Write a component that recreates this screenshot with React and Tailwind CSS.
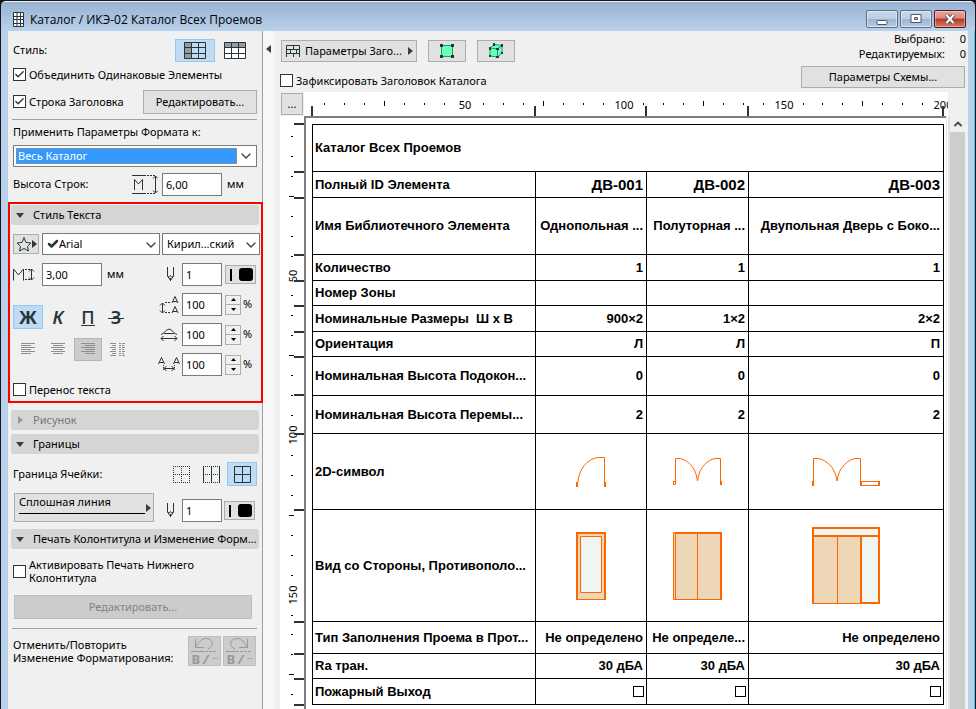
import React from 'react';
import { ChevronDown, ChevronUp, Check } from 'lucide-react';

const rulerTicks = Array.from({ length: 33 }, (_, i) => i + 1);
const columnMarks = [8, 231, 342, 444, 639];
const rowMarks = [8, 56, 82, 139, 165, 190, 216, 241, 279, 318, 394, 506, 538, 563, 589];

const rows = [
    { name: 'Полный ID Элемента', height: 'h-[26px]', values: ['ДВ-001', 'ДВ-002', 'ДВ-003'], big: true },
    {
        name: 'Имя Библиотечного Элемента',
        height: 'h-[57px]',
        values: ['Однопольная ...', 'Полуторная ...', 'Двупольная Дверь с Боко...'],
    },
    { name: 'Количество', height: 'h-[26px]', values: ['1', '1', '1'] },
    { name: 'Номер Зоны', height: 'h-[25px]', values: ['', '', ''] },
    { name: 'Номинальные Размеры  Ш х В', height: 'h-[26px]', values: ['900×2', '1×2', '2×2'] },
    { name: 'Ориентация', height: 'h-[25px]', values: ['Л', 'Л', 'П'] },
    { name: 'Номинальная Высота Подокон...', height: 'h-[39px]', values: ['0', '0', '0'] },
    { name: 'Номинальная Высота Перемы...', height: 'h-[38px]', values: ['2', '2', '2'] },
    { name: '2D-символ', height: 'h-[76px]', drawings: [<SinglePlan />, <DoublePlan />, <WidePlan />] },
    {
        name: 'Вид со Стороны, Противополо...',
        height: 'h-[112px]',
        drawings: [<SingleFront />, <DoubleFront />, <WideFront />],
    },
    {
        name: 'Тип Заполнения Проема в Прот...',
        height: 'h-[32px]',
        values: ['Не определено', 'Не определе...', 'Не определено'],
    },
    { name: 'Ra тран.', height: 'h-[25px]', values: ['30 дБА', '30 дБА', '30 дБА'] },
    { name: 'Пожарный Выход', height: 'h-[26px]', checks: true },
];

function Svg({ w, h, children, className = '' }) {
    return (
        <svg
            width={w}
            height={h}
            viewBox={`0 0 ${w} ${h}`}
            fill="none"
            stroke="currentColor"
            className={`shrink-0 ${className}`}
            aria-hidden="true"
        >
            {children}
        </svg>
    );
}

/* Door drawings */

function SinglePlan() {
    return (
        <Svg w={30} h={30} className="mx-auto text-[#ff6600]">
            <path d="M28.5 .5V26M28.5 .5H22C11 2 3 12 2 25" />
            <path d="M1 25v5M29 25v5" strokeWidth="2" />
        </Svg>
    );
}

function DoublePlan() {
    return (
        <Svg w={49} h={28} className="mx-auto text-[#ff6600]">
            <path d="M2.5 24V.5H7C15 2 22 10 23.500 18L24.500 23L25.500 18C27 10 34 2 42 .5H47.500V24" />
            <path d="M.5 23.500h2v3h-2z" />
            <path d="M48 23v4" strokeWidth="2" />
        </Svg>
    );
}

function WidePlan() {
    return (
        <Svg w={68} h={28} className="mx-auto text-[#ff6600]">
            <path d="M1.500 24V.5H6C15 2 22 10 24 18L25 23L26 18C28 10 35 2 43 .5H48.500V24" />
            <path d="M1 23v5" strokeWidth="2" />
            <path d="M48.500 23.500H67.500V27.500H48.500z" />
            <path d="M49 23v5M67 23v5" strokeWidth="2" />
        </Svg>
    );
}

function SingleFront() {
    return (
        <Svg w={30} h={68} className="mx-auto text-[#ff6600]">
            <path d="M0 0h30v68H0z" fill="#eed7b7" stroke="none" />
            <path d="M4.500 4.500h21v56h-21z" fill="#eff5f1" />
            <path d="M1 68V1H29V68" strokeWidth="2" />
            <path d="M0 67.500h30" />
        </Svg>
    );
}

function DoubleFront() {
    return (
        <Svg w={49} h={68} className="mx-auto text-[#ff6600]">
            <path d="M.5 .5H48.500V67.500H.5z" fill="#eed7b7" />
            <path d="M2.500 1V67M24.500 1V67" />
            <path d="M2 1H48V68" strokeWidth="2" />
        </Svg>
    );
}

function WideFront() {
    return (
        <Svg w={68} h={77} className="mx-auto text-[#ff6600]">
            <path d="M1 9h48v67H1z" fill="#eed7b7" stroke="none" />
            <path d="M49 9h18v67H49zM1 1h66v8H1z" fill="#eff5f1" stroke="none" />
            <path d="M1 77V1H67V76H49V9M1 9H67" strokeWidth="2" />
            <path d="M25.500 9V76M0 76.500H50" />
        </Svg>
    );
}

/* Toolbar and palette icons */

function GridIcon({ side }) {
    return (
        <Svg w={22} h={17} className="text-[#26343c]">
            {!side && <path d="M.5 .5h21v16H.5z" fill="#fff" stroke="none" />}
            {side ? (
                <path d="M0 0h7v17H0z" fill="#949c9f" stroke="none" />
            ) : (
                <path d="M0 0h22v5H0z" fill="#949c9f" stroke="none" />
            )}
            <path d="M.5 .5h21v16H.5zM.5 5.500h21M.5 11.500h21M7.500 .5v16M14.500 .5v16" />
        </Svg>
    );
}

function PenIcon() {
    return (
        <Svg w={9} h={15} className="text-[#26343c]">
            <path d="M1.500 0V9L4.500 13.500L7.500 9V0M1.500 8.500C2.500 10.500 3.500 10.500 4.500 8.500C5.500 10.500 6.500 10.500 7.500 8.500M4.500 11v3" />
        </Svg>
    );
}

function LetterHeightIcon() {
    return (
        <Svg w={22} h={13} className="text-[#26343c]">
            <path d="M.5 12.500V1L5.500 7L10.500 1V12.500" />
            <path d="M12 1.500h6M12 11.500h6" strokeDasharray="2 1" />
            <path d="M18.500 1v11M16 3.500L18.500 1L21 3.500M16 9.500L18.500 12L21 9.500" />
        </Svg>
    );
}

function RowHeightIcon() {
    return (
        <Svg w={26} h={19} className="text-[#26343c]">
            <path d="M0 .5h14M0 18.500h14" />
            <path d="M15 .5h8M15 18.500h8" strokeDasharray="2 1" />
            <path d="M2.500 15V4.500L6.500 9L10.500 4.500V15" />
            <path d="M23.500 1v17M21 3.500L23.500 1L26 3.500M21 15.500L23.500 18L26 15.500" />
        </Svg>
    );
}

function LeadingIcon() {
    return (
        <Svg w={20} h={18} className="text-[#26343c]">
            <path d="M3.500 7v10M1 9.500L3.500 7L6 9.500M1 14.500L3.500 17L6 14.500" />
            <path d="M6 6.500h6M6 16.500h6" strokeDasharray="2 1" />
            <path d="M13 7L16 .5L19 7M14 5.500h4M13 17L16 10.500L19 17M14 15.500h4" />
        </Svg>
    );
}

function WidthIcon() {
    return (
        <Svg w={18} h={13} className="text-[#26343c]">
            <path d="M1 6.500C4 6 5 2 9 1C13 2 14 6 17 6.500M4 5.500h10" />
            <path d="M1 10.500h16M3.500 8L1 10.500L3.500 13M14.500 8L17 10.500L14.500 13" />
        </Svg>
    );
}

function SpacingIcon() {
    return (
        <Svg w={22} h={15} className="text-[#26343c]">
            <path d="M.5 7L3.500 .5L6.500 7M1.500 5.500h4M15.500 7L18.500 .5L21.500 7M16.500 5.500h4" />
            <path d="M5.500 8v5M16.500 8v5" strokeDasharray="1 1" />
            <path d="M6 11.500h10M8.500 9L6 11.500L8.500 14M13.500 9L16 11.500L13.500 14" />
        </Svg>
    );
}

function AlignIcon({ type }) {
    const paths = {
        left: 'M0 .5h14M0 2.500h10M0 4.500h14M0 6.500h10M0 8.500h14M0 10.500h10',
        center: 'M0 .5h14M2 2.500h10M0 4.500h14M2 6.500h10M0 8.500h14M2 10.500h10',
        right: 'M0 .5h14M4 2.500h10M0 4.500h14M4 6.500h10M0 8.500h14M4 10.500h10',
        split: 'M0 .5h6M2 2.500h4M0 4.500h6M2 6.500h4M0 8.500h6M2 10.500h4M0 12.500h6M9 .5h2M12 .5h3M9 2.500h2M12 2.500h2M9 4.500h2M12 4.500h3M9 6.500h2M12 6.500h2M9 8.500h2M12 8.500h3M9 10.500h2M12 10.500h2M9 12.500h2M12 12.500h3',
    };
    return (
        <Svg w={15} h={13} className="text-[#8e8e8e]">
            <path d={paths[type]} />
        </Svg>
    );
}

function BorderIcon({ type }) {
    return (
        <Svg w={17} h={17} className="text-[#26343c]">
            {type === 'all' && <path d="M.5 .5h16v16H.5zM.5 8.500h16M8.500 .5v16" />}
            {type === 'none' && <path d="M0 .5h17M0 8.500h17M0 16.500h17M.5 0v17M8.500 0v17M16.500 0v17" strokeDasharray="1 1" />}
            {type === 'columns' && (
                <>
                    <path d="M0 .5h17M0 8.500h17M0 16.500h17" strokeDasharray="1 1" />
                    <path d="M.5 0v17M8.500 0v17M16.500 0v17" />
                </>
            )}
        </Svg>
    );
}

function HistoryIcon({ redo }) {
    return (
        <div className="flex flex-col items-center text-[#999]">
            <Svg w={26} h={15}>
                {redo ? (
                    <path d="M9 12C2 9 4 1.500 11 1.500C16 1.500 18 5 21 10M21.500 2v8.500H13" />
                ) : (
                    <path d="M17 12C24 9 22 1.500 15 1.500C11 1.500 8 5 4.500 10M4.500 2v8.500H13" />
                )}
                <path d="M0 14.500h13" />
                <path d="M14 14.500h12" strokeDasharray="3 1" />
            </Svg>
            <span className="flex items-center gap-[3px] text-[13px] leading-[14px] font-bold">
                B<i>/</i>
                <span className="h-px w-1.5 bg-[#8fb0e6]" />
            </span>
        </div>
    );
}

function Triangle({ dir = 'right', className = 'text-[#3c3c3c]' }) {
    return dir === 'down' ? (
        <Svg w={8} h={5} className={className}>
            <path d="M0 0h8L4 5z" fill="currentColor" stroke="none" />
        </Svg>
    ) : (
        <Svg w={5} h={8} className={className}>
            <path d={dir === 'left' ? 'M5 0v8L0 4z' : 'M0 0v8L5 4z'} fill="currentColor" stroke="none" />
        </Svg>
    );
}

/* Controls */

const CheckBox = ({ label, checked, wide }) => (
    <label className={`flex items-center gap-[3px] leading-[13px] ${wide ? 'w-[200px]' : ''}`}>
        <span className="relative flex shrink-0">
            <input
                type="checkbox"
                defaultChecked={checked}
                className="peer size-[13px] appearance-none border border-[#333] bg-white"
            />
            <Check className="pointer-events-none absolute top-px left-px hidden size-[11px] text-[#333] peer-checked:block" strokeWidth={3} />
        </span>
        <span>{label}</span>
    </label>
);

const TextBox = ({ value, label, width = 'w-10' }) => (
    <input
        aria-label={label}
        defaultValue={value}
        className={`h-[23px] shrink-0 border border-[#7a7a7a] bg-white pl-[3px] outline-none ${width}`}
    />
);

const Section = ({ title, closed }) => (
    <button
        type="button"
        className={`flex h-5 w-[248px] shrink-0 items-center rounded-[3px] bg-[#d5d5d5] text-left ${closed ? 'text-[#777]' : ''}`}
    >
        <span className="flex w-[22px] shrink-0 pl-[5px]">
            {closed ? (
                <span className="ml-0.5 flex"><Triangle className="text-[#999]" /></span>
            ) : (
                <Triangle dir="down" />
            )}
        </span>
        <span className="truncate">{title}</span>
    </button>
);

const PenColor = () => (
    <button type="button" aria-label="Цвет пера" className="flex h-[19px] w-[31px] shrink-0 items-center justify-between border border-[#adadad] bg-[#e1e1e1] pr-0.5 pl-1">
        <span className="h-3 w-0.5 bg-black" />
        <span className="h-[13px] w-3.5 rounded-[3px] bg-black" />
    </button>
);

const Spinner = () => (
    <div className="flex h-5 w-4 shrink-0 flex-col border border-[#adadad] bg-[#f0f0f0]">
        <button type="button" aria-label="Больше" className="flex flex-1 items-center justify-center border-b border-[#adadad]">
            <Svg w={5} h={3} className="text-black">
                <path d="M0 3h5L2.500 0z" fill="currentColor" stroke="none" />
            </Svg>
        </button>
        <button type="button" aria-label="Меньше" className="flex flex-1 items-center justify-center">
            <Svg w={5} h={3} className="text-black">
                <path d="M0 0h5L2.500 3z" fill="currentColor" stroke="none" />
            </Svg>
        </button>
    </div>
);

const PercentRow = ({ icon, label }) => (
    <div className="flex h-[23px] items-center">
        <span className="flex w-[26px] shrink-0 items-center justify-center">{icon}</span>
        <TextBox value="100" label={label} />
        <span className="ml-[3px] flex"><Spinner /></span>
        <span className="ml-0.5">%</span>
    </div>
);

const SelectBox = ({ value, label, width, icon }) => (
    <div className={`relative h-[22px] shrink-0 border border-[#7a7a7a] bg-white ${width}`}>
        {icon && <span className="pointer-events-none absolute top-1 left-1">{icon}</span>}
        <select aria-label={label} className={`size-full appearance-none outline-none ${icon ? 'pl-4' : 'pl-1'}`}>
            <option>{value}</option>
        </select>
        <ChevronDown className="pointer-events-none absolute top-[3px] right-0 size-4 text-[#404040]" strokeWidth={2} />
    </div>
);

const Palette = () => (
    <aside className="w-[255px] shrink-0 border-r border-[#a0a0a0] pt-2">
        <div className="flex h-[23px] items-center pl-[5px]">
            <span>Стиль:</span>
            <button type="button" aria-label="Стиль 1" className="mr-[9px] ml-auto flex h-[23px] w-10 items-center justify-center border border-[#90c8f6] bg-[#c0dcf3]">
                <GridIcon side />
            </button>
            <button type="button" aria-label="Стиль 2" className="mr-4 flex">
                <GridIcon />
            </button>
        </div>
        <div className="mt-px flex h-[23px] items-center pl-[5px]">
            <CheckBox label="Объединить Одинаковые Элементы" checked />
        </div>
        <div className="mt-1 flex h-6 items-start justify-between pr-[5px] pl-[5px]">
            <span className="flex h-[23px] items-center">
                <CheckBox label="Строка Заголовка" checked />
            </span>
            <button type="button" className="h-6 w-[114px] border border-[#adadad] bg-[#e1e1e1]">
                Редактировать...
            </button>
        </div>
        <hr className="mt-[5px] mr-[5px] ml-1 border-[#a0a0a0]" />
        <label htmlFor="format-target" className="flex h-6 items-center pl-[5px]">
            Применить Параметры Формата к:
        </label>
        <div className="mt-px mr-[5px] ml-[5px] flex h-[22px] items-center border border-[#7a7a7a] bg-white p-0.5">
            <select
                id="format-target"
                className="h-4 flex-1 appearance-none border border-dotted border-[#c98a4a] bg-[#3399ff] pl-px leading-[14px] text-white outline-none"
            >
                <option>Весь Каталог</option>
            </select>
            <ChevronDown className="ml-px size-4 text-[#404040]" strokeWidth={2} />
        </div>
        <div className="mt-1.5 flex h-[23px] items-center pl-[5px]">
            <span className="w-[119px]">Высота Строк:</span>
            <RowHeightIcon />
            <span className="ml-1 flex">
                <TextBox value="6,00" label="Высота Строк" width="w-[60px]" />
            </span>
            <span className="ml-[5px]">мм</span>
        </div>

        <section className="relative mt-1.5 -mr-px border-2 border-[#ff0000] pt-px pl-px">
            <Section title="Стиль Текста" />
            <div className="mt-2 flex h-[22px] items-center pl-0.5">
                <button type="button" aria-label="Избранное" className="mr-[3px] flex h-5 w-[26px] items-center border border-[#adadad] bg-[#e1e1e1] pl-0.5">
                    <Svg w={16} h={15} className="text-[#26343c]">
                        <path d="M8 .5L10 5.500L15 6L11.500 9.500L12.500 14L8 11.500L3.500 14L4.500 9.500L1 6L6 5.500z" />
                    </Svg>
                    <Triangle className="text-[#26343c]" />
                </button>
                <SelectBox
                    value="Arial"
                    label="Шрифт"
                    width="w-[118px]"
                    icon={<Check className="size-3 text-[#26343c]" strokeWidth={5} />}
                />
                <span className="ml-0.5 flex">
                    <SelectBox value="Кирил...ский" label="Набор символов" width="w-[98px]" />
                </span>
            </div>
            <div className="mt-2 flex pl-0.5">
                <div className="w-[143px] shrink-0">
                    <div className="flex h-[23px] items-center">
                        <LetterHeightIcon />
                        <span className="ml-[7px] flex">
                            <TextBox value="3,00" label="Высота шрифта" width="w-[60px]" />
                        </span>
                        <span className="ml-[5px]">мм</span>
                    </div>
                    <div className="mt-[19px] flex h-6 text-[18px] text-[#26343c]">
                        <button type="button" className="w-[30px] border border-[#90c8f6] bg-[#c0dcf3] leading-[20px] font-bold">Ж</button>
                        <button type="button" className="w-[30px] leading-[22px] font-semibold italic">К</button>
                        <button type="button" className="relative w-[30px] leading-[20px] font-medium">
                            П
                            <span className="absolute bottom-[3px] left-2 h-px w-3.5 bg-[#26343c]" />
                        </button>
                        <button type="button" className="relative w-[26px] leading-[22px] font-semibold">
                            З
                            <span className="absolute top-[13px] left-[5px] h-px w-4 bg-[#26343c]" />
                        </button>
                    </div>
                    <div className="mt-[9px] flex h-[23px]">
                        <button type="button" aria-label="По левому краю" className="flex w-[30px] items-center justify-center"><AlignIcon type="left" /></button>
                        <button type="button" aria-label="По центру" className="flex w-[31px] items-center justify-center"><AlignIcon type="center" /></button>
                        <button type="button" aria-label="По правому краю" className="flex w-7 items-center justify-center border border-[#b5b5b5] bg-[#cccccc]"><AlignIcon type="right" /></button>
                        <button type="button" aria-label="По ширине" className="flex w-[30px] items-center justify-center"><AlignIcon type="split" /></button>
                    </div>
                </div>
                <div className="flex flex-col gap-[7px]">
                    <div className="flex h-[23px] items-center">
                        <span className="flex w-[26px] shrink-0 pl-2.5"><PenIcon /></span>
                        <TextBox value="1" label="Перо текста" />
                        <span className="ml-[3px] flex"><PenColor /></span>
                    </div>
                    <PercentRow icon={<LeadingIcon />} label="Интерлиньяж" />
                    <PercentRow icon={<WidthIcon />} label="Ширина" />
                    <PercentRow icon={<SpacingIcon />} label="Интервал" />
                </div>
            </div>
            <div className="mt-0.5 flex h-[23px] items-center pl-0.5">
                <CheckBox label="Перенос текста" />
            </div>
        </section>

        <div className="mt-[7px] flex flex-col gap-1 pl-[3px]">
            <Section title="Рисунок" closed />
            <Section title="Границы" />
        </div>
        <div className="mt-2 flex h-6 items-center pr-[5px] pl-[5px]">
            <span className="mr-auto">Граница Ячейки:</span>
            <button type="button" aria-label="Без границ" className="flex w-[29px] justify-center"><BorderIcon type="none" /></button>
            <button type="button" aria-label="Вертикальные границы" className="flex w-[31px] justify-center"><BorderIcon type="columns" /></button>
            <button type="button" aria-label="Все границы" className="flex h-6 w-[30px] items-center justify-center border border-[#90c8f6] bg-[#c0dcf3]"><BorderIcon type="all" /></button>
        </div>
        <div className="mt-[7px] flex items-end pl-1.5">
            <button type="button" className="flex h-[29px] w-[140px] items-center justify-between border border-[#adadad] bg-[#e1e1e1] pr-0.5 pl-1 text-left">
                <span className="flex w-[126px] flex-col gap-1 self-start pt-px leading-[14px]">
                    Сплошная линия
                    <span className="h-px bg-black" />
                </span>
                <Triangle />
            </button>
            <div className="ml-0.5 flex h-[23px] items-center">
                <span className="flex w-[26px] shrink-0 pl-2.5"><PenIcon /></span>
                <TextBox value="1" label="Перо границы" />
                <span className="ml-0.5 flex"><PenColor /></span>
            </div>
        </div>
        <div className="mt-[7px] pl-[3px]">
            <Section title="Печать Колонтитула и Изменение Форм..." />
        </div>
        <div className="mt-2 flex h-7 items-center pl-[5px]">
            <CheckBox label="Активировать Печать Нижнего Колонтитула" wide />
        </div>
        <button type="button" disabled className="mt-2.5 ml-1.5 block h-6 w-[238px] border border-[#bfbfbf] bg-[#cccccc] text-[#838383]">
            Редактировать...
        </button>
        <hr className="mt-[9px] mr-[5px] ml-1 border-[#a0a0a0]" />
        <div className="mt-[7px] flex items-center pr-1.5 pl-[5px]">
            <p className="mr-auto w-[172px] leading-[13px]">Отменить/Повторить Изменение Форматирования:</p>
            <button type="button" disabled aria-label="Отменить" className="mr-0.5 flex h-[30px] w-[33px] items-center justify-center border border-[#bfbfbf] bg-[#cccccc]"><HistoryIcon /></button>
            <button type="button" disabled aria-label="Повторить" className="flex h-[30px] w-[33px] items-center justify-center border border-[#bfbfbf] bg-[#cccccc]"><HistoryIcon redo /></button>
        </div>
    </aside>
);

const TopRuler = () => (
    <svg className="mr-5 h-6 min-w-0 flex-1 bg-white" aria-hidden="true">
        {rulerTicks.map((i) => {
            const x = Math.round(i * 19.94);
            if (i % 8 === 0) {
                return (
                    <text key={i} x={x + 1} y="17" textAnchor="middle" fontSize="11">{(i / 8) * 50}</text>
                );
            }
            return i % 4 === 0 ? (
                <rect key={i} x={x} y="9" width="1" height="5" />
            ) : (
                <rect key={i} x={x} y="11" width="1" height="2" />
            );
        })}
        {columnMarks.map((x) => <rect key={x} x={x - 1} y="14" width="2" height="10" fill="#26343c" />)}
    </svg>
);

const SideRuler = () => (
    <svg className="h-full w-6 shrink-0 bg-white" aria-hidden="true">
        {rulerTicks.slice(0, 29).map((i) => {
            const y = Math.round(i * 19.94);
            if (i % 8 === 0) {
                return (
                    <text key={i} x="17" y={y} textAnchor="middle" fontSize="11" transform={`rotate(-90 17 ${y})`}>
                        {(i / 8) * 50}
                    </text>
                );
            }
            return i % 4 === 0 ? (
                <rect key={i} x="9" y={y} width="5" height="1" />
            ) : (
                <rect key={i} x="11" y={y} width="2" height="1" />
            );
        })}
        {rowMarks.map((y) => <rect key={y} x="14" y={y - 1} width="10" height="2" fill="#26343c" />)}
    </svg>
);

const cell = 'border-r border-b border-black p-0 font-bold whitespace-pre';

const Schedule = () => (
    <table className="w-full table-fixed border-separate border-spacing-0 border-t border-l border-black font-['Liberation_Sans',Arial,sans-serif] text-[13px] leading-[18px] text-black">
        <colgroup>
            <col className="w-[223px]" />
            <col className="w-[111px]" />
            <col className="w-[102px]" />
            <col />
        </colgroup>
        <tbody>
            <tr className="h-[47px]">
                <th colSpan={4} className={`${cell} pl-0.5 text-left`}>Каталог Всех Проемов</th>
            </tr>
            {rows.map((row) => (
                <tr key={row.name} className={row.height}>
                    <th scope="row" className={`${cell} pl-0.5 text-left`}>{row.name}</th>
                    {row.values?.map((value, i) => (
                        <td key={i} className={`${cell} overflow-hidden pr-[3px] text-right ${row.big ? 'text-[15px]' : ''}`}>{value}</td>
                    ))}
                    {row.drawings?.map((drawing, i) => (
                        <td key={i} className={cell}>{drawing}</td>
                    ))}
                    {row.checks && [1, 2, 3].map((i) => (
                        <td key={i} className={`${cell} pr-0.5`}>
                            <input type="checkbox" aria-label={row.name} className="ml-auto block size-[11px] appearance-none border border-black" />
                        </td>
                    ))}
                </tr>
            ))}
        </tbody>
    </table>
);

const TitleBar = () => (
    <header className="flex h-[30px] shrink-0 items-center rounded-t-[5px] border-t border-[#e6eef7] bg-gradient-to-b from-[#98b2d2] to-[#b9d1ea] pt-1.5 pr-[9px] pl-3">
        <Svg w={11} h={15} className="text-[#26343c]">
            <path d="M.5 .5h10v14H.5z" fill="#fff" />
            <path d="M.5 4.500h10M.5 7.500h10M.5 11.500h10M4 .5v14M7.500 .5v14" />
        </Svg>
        <h1 className="ml-1.5 font-['Open_Sans',sans-serif] text-[12px] leading-4">Каталог / ИКЭ-02 Каталог Всех Проемов</h1>
        <div className="mb-px ml-auto flex gap-0.5">
            <button type="button" aria-label="Свернуть" className="flex h-[18px] w-8 items-center justify-center rounded-[2px] border border-[#5c6f89] bg-linear-[180deg,#c9daeb_0%,#bacee4_48%,#9cb4cf_50%,#b5cbe3_100%] shadow-[inset_0_0_0_1px_rgba(255,255,255,0.45)]">
                <Svg w={12} h={14} className="text-[#4a5568]">
                    <rect x="1" y="8.500" width="10" height="4" rx="1" fill="#fff" />
                </Svg>
            </button>
            <button type="button" aria-label="Развернуть" className="flex h-[18px] w-8 items-center justify-center rounded-[2px] border border-[#5c6f89] bg-linear-[180deg,#c9daeb_0%,#bacee4_48%,#9cb4cf_50%,#b5cbe3_100%] shadow-[inset_0_0_0_1px_rgba(255,255,255,0.45)]">
                <Svg w={12} h={10} className="text-[#4a5568]">
                    <path d="M1 .5h10v8H1zM4.500 3.500h3v2h-3z" fill="#fff" fillRule="evenodd" />
                </Svg>
            </button>
            <button type="button" aria-label="Закрыть" className="flex h-[18px] w-8 items-center justify-center rounded-[2px] border border-[#4a1b22] bg-linear-[180deg,#e3a79b_0%,#d6897b_45%,#b8361f_50%,#d08069_100%] shadow-[inset_0_0_0_1px_rgba(255,255,255,0.35)]">
                <Svg w={12} h={10}>
                    <path d="M2.500 1L9.500 9M9.500 1L2.500 9" stroke="#4a5568" strokeWidth="4" />
                    <path d="M2.500 1L9.500 9M9.500 1L2.500 9" stroke="#fff" strokeWidth="2" />
                </Svg>
            </button>
        </div>
    </header>
);

export default function App() {
    return (
        <div className="flex h-screen flex-col overflow-hidden border-x border-t border-[#16161c] bg-[#16161c] font-['Noto_Sans',sans-serif] text-[11px] text-black">
            <TitleBar />
            <div className="flex min-h-0 min-w-0 flex-1 border-r border-[#3fc4ea] bg-[#b9d1ea] pr-1.5 pl-[7px]">
                <div className="flex min-w-0 flex-1 bg-[#f0f0f0]">
                    <Palette />
                    <button type="button" aria-label="Свернуть панель" className="flex w-[11px] shrink-0 bg-[#f7f7f7] pt-[14px] pl-[3px]">
                        <Triangle dir="left" className="text-[#3c3c3c]" />
                    </button>
                    <main className="flex min-w-0 flex-1 flex-col">
                        <div className="flex h-[61px] shrink-0 justify-between">
                            <div className="pt-[9px] pl-1.5">
                                <div className="flex gap-[11px] pl-px">
                                    <button type="button" className="flex h-[22px] w-[136px] items-center border border-[#adadad] bg-[#e1e1e1] pr-[3px] pl-1">
                                        <Svg w={14} h={12} className="text-[#26343c]">
                                            <path d="M.5 12V.5h13V12M.5 4.500h13M.5 8.500h13M7.500 .5v4M4.500 4.500v4M10.500 4.500v4M7.500 8.500V12" />
                                        </Svg>
                                        <span className="mr-auto ml-[5px]">Параметры Заго...</span>
                                        <Triangle />
                                    </button>
                                    <button type="button" aria-label="Выбрать на плане" className="flex h-[22px] w-[38px] items-center justify-center border border-[#adadad] bg-[#e1e1e1]">
                                        <Svg w={14} h={14} className="text-[#26343c]">
                                            <path d="M1.500 1.500h11v11h-11z" fill="#66ffbb" stroke="#16a05c" />
                                            <path d="M0 0h3v3H0zM11 0h3v3h-3zM0 11h3v3H0zM11 11h3v3h-3z" fill="currentColor" stroke="none" />
                                        </Svg>
                                    </button>
                                    <button type="button" aria-label="Выбрать в 3D" className="flex h-[22px] w-[38px] items-center justify-center border border-[#adadad] bg-[#e1e1e1]">
                                        <Svg w={16} h={16} className="text-[#26343c]">
                                            <path d="M2 5L6 1.500L14 2.500V10L9.500 14L2 13z" fill="#66ffbb" stroke="#16a05c" />
                                            <path d="M2 5L9.500 6V14M9.500 6L14 2.500" stroke="#16a05c" />
                                            <path d="M1 4h2v3H1zM5 0h2v3H5zM13 1h2v3h-2zM8 5h3v2H8zM1 12h2v2H1zM8 13h3v2H8zM13 9h2v2h-2z" fill="currentColor" stroke="none" />
                                        </Svg>
                                    </button>
                                </div>
                                <div className="mt-3">
                                    <CheckBox label="Зафиксировать Заголовок Каталога" />
                                </div>
                            </div>
                            <div className="pr-0.5">
                                <dl className="grid grid-cols-[1fr_21px] text-right leading-[15px]">
                                    <dt>Выбрано:</dt>
                                    <dd>0</dd>
                                    <dt>Редактируемых:</dt>
                                    <dd>0</dd>
                                </dl>
                                <button type="button" className="mt-[5px] mr-px block h-[22px] w-[164px] border border-[#adadad] bg-[#e1e1e1]">
                                    Параметры Схемы...
                                </button>
                            </div>
                        </div>
                        <div className="flex h-6 shrink-0">
                            <button type="button" className="mt-px mr-px ml-[7px] h-[22px] w-[22px] border border-[#adadad] bg-[#e1e1e1]">...</button>
                            <TopRuler />
                        </div>
                        <div className="flex min-h-0 flex-1 pl-1.5">
                            <SideRuler />
                            <div className="min-w-0 flex-1 overflow-hidden border-t-2 border-l-2 border-[#7d7d7d] bg-white pt-1.5 pr-0.5 pl-1.5">
                                <Schedule />
                            </div>
                            <div className="w-1 shrink-0 border-r-2 border-l border-[#e3e3e3] bg-white" />
                            <div className="mr-[3px] w-[15px] shrink-0 bg-[#cdcdcd]">
                                <button type="button" aria-label="Вверх" className="flex h-4 w-full items-center justify-center bg-[#f0f0f0]">
                                    <ChevronUp className="size-3 text-[#505050]" strokeWidth={4} />
                                </button>
                            </div>
                        </div>
                    </main>
                </div>
            </div>
        </div>
    );
}
